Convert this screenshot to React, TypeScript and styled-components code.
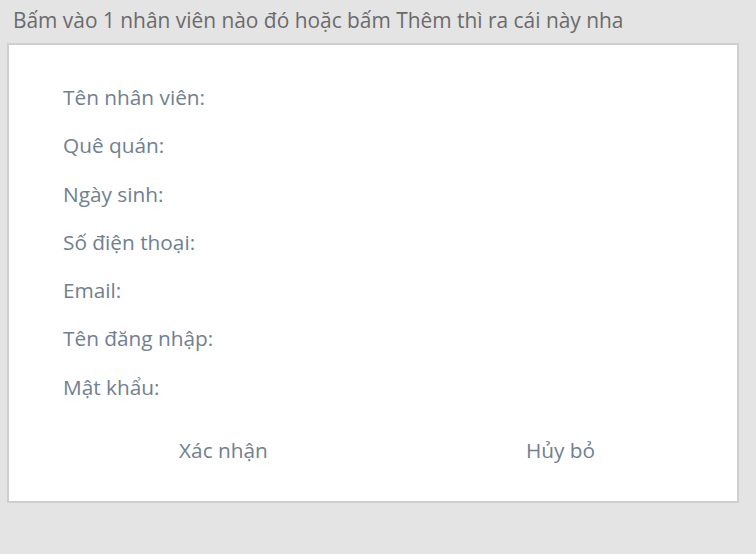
import React from 'react';
import styled, { createGlobalStyle } from 'styled-components';

const GlobalStyle = createGlobalStyle`
  html, body {
    margin: 0;
    padding: 0;
    background-color: #e4e4e4;
  }
  body {
    font-family: "Open Sans", "Noto Sans", sans-serif;
  }
`;

const StyledPage = styled.div`
  width: 756px;
  height: 554px;
  padding: 0px 17px 0px 7px;
  box-sizing: border-box;
`;

const StyledHint = styled.p`
  margin: 0px;
  padding: 6px 0px 0px 6px;
  height: 43px;
  box-sizing: border-box;
  font-size: 20.9px;
  line-height: 28px;
  color: #6b6b6b;
`;

const StyledCard = styled.div`
  width: 732px;
  height: 460px;
  box-sizing: border-box;
  background-color: #ffffff;
  border: 2px solid #cfcfcf;
  padding: 38px 0px 0px 0px;
`;

const StyledFieldList = styled.div`
  display: flex;
  flex-direction: column;
  padding-left: 54px;
`;

const StyledLabel = styled.div`
  height: 48.3px;
  font-size: 20.8px;
  line-height: 28px;
  color: #708090;
`;

const StyledActions = styled.div`
  display: grid;
  grid-template-columns: 1fr 1fr;
  padding: 15px 8px 0px 46px;
`;

const StyledAction = styled.button`
  border: none;
  background: none;
  padding: 0px;
  font-family: inherit;
  font-size: 20.8px;
  line-height: 28px;
  color: #708090;
  text-align: center;
  cursor: pointer;
`;

const fields = [
  'Tên nhân viên:',
  'Quê quán:',
  'Ngày sinh:',
  'Số điện thoại:',
  'Email:',
  'Tên đăng nhập:',
  'Mật khẩu:',
];

const App: React.FC = () => {
  return (
    <>
      <GlobalStyle />
      <StyledPage>
        <StyledHint>Bấm vào 1 nhân viên nào đó hoặc bấm Thêm thì ra cái này nha</StyledHint>
        <StyledCard>
          <StyledFieldList>
            {fields.map((field) => (
              <StyledLabel key={field}>{field}</StyledLabel>
            ))}
          </StyledFieldList>
          <StyledActions>
            <StyledAction>Xác nhận</StyledAction>
            <StyledAction>Hủy bỏ</StyledAction>
          </StyledActions>
        </StyledCard>
      </StyledPage>
    </>
  );
};

export default App;
